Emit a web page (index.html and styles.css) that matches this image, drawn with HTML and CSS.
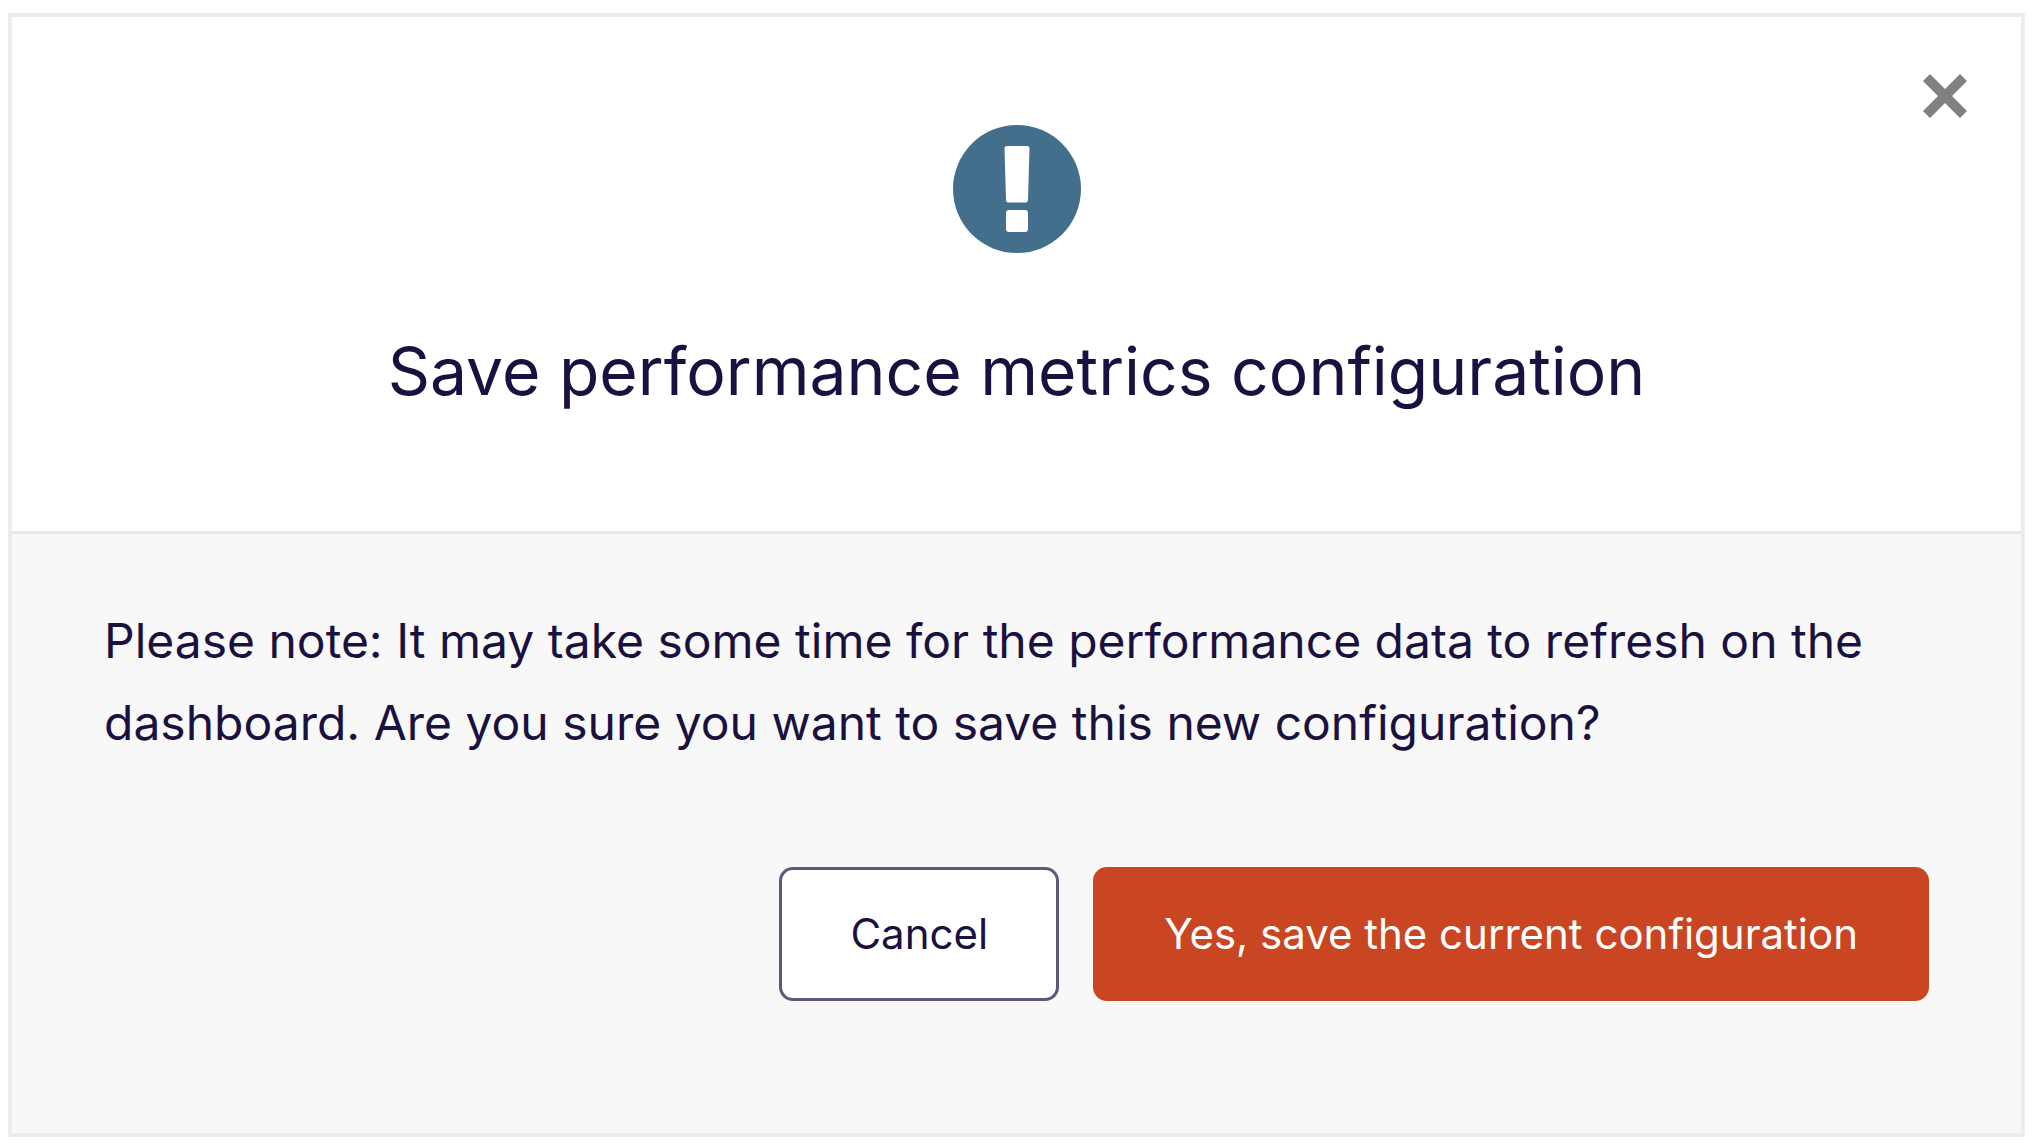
FILE: index.html
```
<!DOCTYPE html>
<html lang="en">
<head>
  <meta charset="UTF-8" />
  <meta name="viewport" content="width=device-width, initial-scale=1" />
  <title>Save performance metrics configuration</title>
  <link rel="stylesheet" href="styles.css">
</head>
<body>

  <section class="modal" role="dialog" aria-labelledby="modal-title" aria-describedby="modal-text">
    <header class="modal-header">
      <button class="close-btn" type="button" aria-label="Close">
        <svg viewBox="0 0 44 44" aria-hidden="true">
          <path d="M0 7 7 0 22 15 37 0 44 7 29 22 44 37 37 44 22 29 7 44 0 37 15 22Z" fill="#808080" />
        </svg>
      </button>
      <svg class="alert-icon" viewBox="0 0 128 128" aria-hidden="true">
        <circle cx="64" cy="64" r="64" fill="#446f8c" />
        <path d="M54 21h20q2.500 0 2.500 2.500L75 75q0 2.500-2.500 2.500h-17q-2.500 0-2.500-2.500L51.500 23.500Q51.500 21 54 21Z" fill="#fff" />
        <rect x="53" y="85" width="22" height="22" rx="3" fill="#fff" />
      </svg>
      <h1 class="modal-title" id="modal-title">Save performance metrics configuration</h1>
    </header>

    <div class="modal-body">
      <p class="modal-text" id="modal-text">Please note: It may take some time for the performance data to refresh on the dashboard. Are you sure you want to save this new configuration?</p>
      <div class="modal-actions">
        <button class="btn btn-cancel" type="button">Cancel</button>
        <button class="btn btn-save" type="button">Yes, save the current configuration</button>
      </div>
    </div>
  </section>

</body>
</html>
```
FILE: styles.css
```
* {
  box-sizing: border-box;
}
body {
  display: flex;
  min-height: 100vh;
  margin: 0;
  padding: 13px 9px 9px 8px;
  background: #fff;
  color: #1b1140;
  font-family: Inter, "Liberation Sans", sans-serif;
}
.modal {
  position: relative;
  display: flex;
  flex-direction: column;
  flex: 1;
  border: 4px solid #ebecec;
}
.modal-header {
  display: flex;
  flex-direction: column;
  align-items: center;
  padding: 108px 92px 116px;
  border-bottom: 3px solid #e8e8e8;
}
.close-btn {
  position: absolute;
  top: 57px;
  right: 54px;
  width: 44px;
  height: 44px;
  padding: 0;
  border: none;
  background: none;
  cursor: pointer;
}
.close-btn svg {
  display: block;
}
.alert-icon {
  width: 128px;
  height: 128px;
}
.modal-title {
  margin: 74px 0 0;
  font-size: 66px;
  font-weight: 400;
  line-height: 88px;
  text-align: center;
}
.modal-body {
  flex: 1;
  padding: 66px 92px;
  background: #f8f8f8;
}
.modal-text {
  margin: 0;
  font-size: 48px;
  line-height: 82px;
}
.modal-actions {
  display: flex;
  justify-content: flex-end;
  gap: 34px;
  margin-top: 103px;
}
.btn {
  padding: 42px 68px;
  border: 3px solid #5f587c;
  border-radius: 14px;
  font-family: inherit;
  font-size: 42px;
  line-height: 44px;
  cursor: pointer;
}
.btn-cancel {
  background: #fff;
  color: #1b1140;
}
.btn-save {
  border-color: #ca4521;
  background: #ca4521;
  color: #fff;
}
```
